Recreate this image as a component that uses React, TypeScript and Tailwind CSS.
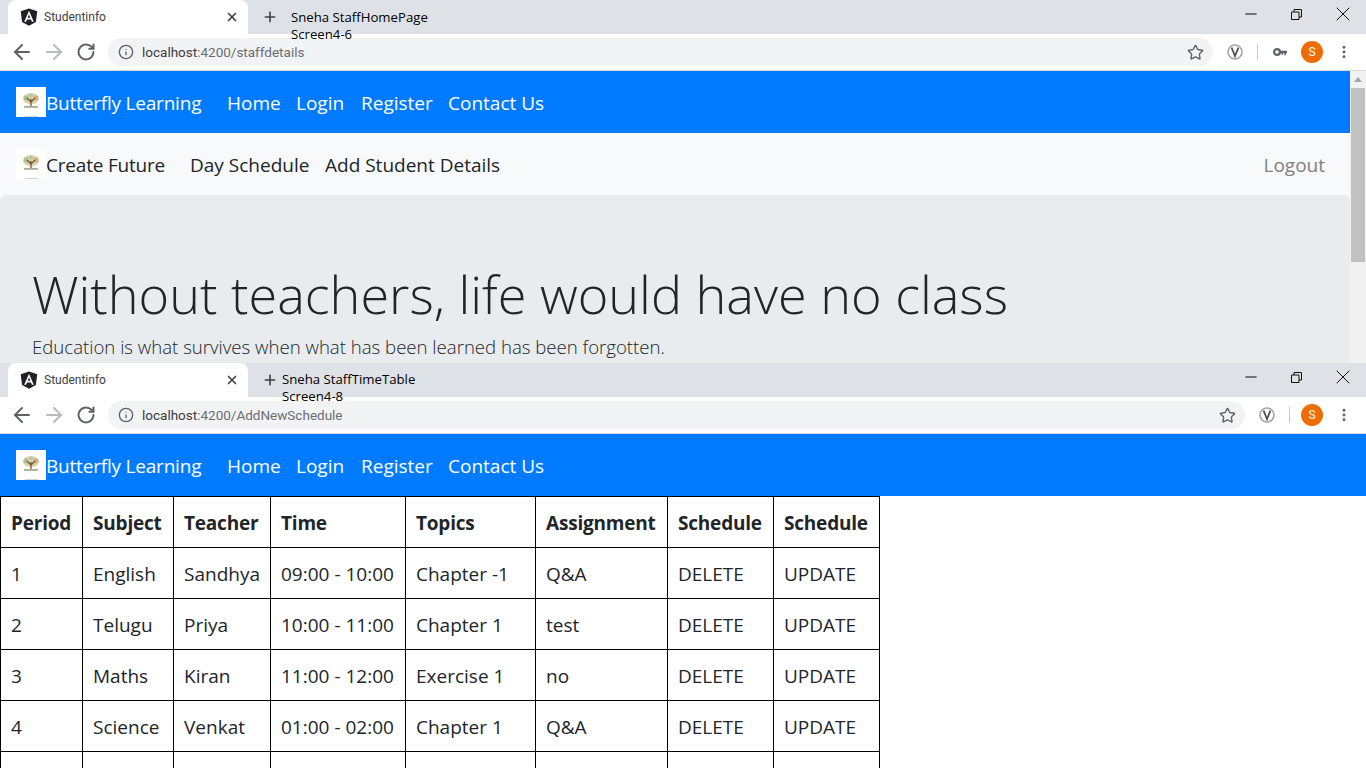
import { ArrowLeft, ArrowRight, RotateCw, Info, Star, X, Plus, Minus, EllipsisVertical } from 'lucide-react';

const font = { sans: "font-['Open_Sans','Liberation_Sans',sans-serif]" };

const rows = [
  ['1', 'English', 'Sandhya', '09:00 - 10:00', 'Chapter -1', 'Q&A'],
  ['2', 'Telugu', 'Priya', '10:00 - 11:00', 'Chapter 1', 'test'],
  ['3', 'Maths', 'Kiran', '11:00 - 12:00', 'Exercise 1', 'no'],
  ['4', 'Science', 'Venkat', '01:00 - 02:00', 'Chapter 1', 'Q&A']
];

const headers = ['Period', 'Subject', 'Teacher', 'Time', 'Topics', 'Assignment', 'Schedule', 'Schedule'];
const colWidths = ['w-[82px]', 'w-[91px]', 'w-[97px]', 'w-[135px]', 'w-[130px]', 'w-[132px]', 'w-[106px]', 'w-[106px]'];

function AngularIcon() {
  return (
    <svg viewBox="0 0 24 24" className="h-[18px] w-[18px] shrink-0">
      <path d="M12 .5 1 4.4l1.8 14.4L12 23.5l9.2-4.7L23 4.4z" fill="#1f2126" />
      <path d="M12 3.6 5.6 18.4h2.5l1.3-3.2h5.2l1.3 3.2h2.5zm0 5.1 1.8 4.4h-3.6z" fill="#fff" />
    </svg>
  );
}

function Logo() {
  return (
    <div className="relative flex h-[30px] w-[30px] shrink-0 items-start justify-center bg-white pt-[6px]">
      <svg viewBox="0 0 18 16" className="h-[16px] w-[18px]">
        <ellipse cx="9" cy="5.5" rx="8" ry="5.5" fill="#d9d3a8" />
        <circle cx="4" cy="5" r="2.4" fill="#a9c095" />
        <circle cx="14" cy="5" r="2.4" fill="#d8ab86" />
        <circle cx="9" cy="2.5" r="2" fill="#b7c79c" />
        <path d="M9 13V6M9 9 5 5M9 9l4-4" stroke="#7a5433" strokeWidth="1.3" fill="none" />
        <rect x="2" y="13" width="14" height="1.8" fill="#a3b08c" />
      </svg>
      <div className="absolute bottom-0 left-[9px] h-px w-[13px] bg-[#d5d5d5]" />
    </div>
  );
}

function VivaldiIcon() {
  return (
    <svg viewBox="0 0 16 16" className="h-4 w-4">
      <circle cx="8" cy="8" r="7" fill="none" stroke="#a3a3a3" strokeWidth="1.6" />
      <path d="M4.6 3.6 8 12l3.4-8.4" fill="none" stroke="#4f5256" strokeWidth="1.8" />
    </svg>
  );
}

function KeyIcon() {
  return (
    <svg viewBox="0 0 14 9" className="h-[9px] w-[14px]">
      <circle cx="4" cy="4" r="2.9" fill="none" stroke="#5f6368" strokeWidth="2.2" />
      <path d="M6.5 2.8H14v2.4h-1.2v2h-1.6v-2H10v1.4H8.4V5.2H6.5z" fill="#5f6368" />
    </svg>
  );
}

function RestoreIcon() {
  return (
    <svg viewBox="0 0 11 11" className="h-[11px] w-[11px]">
      <path d="M.5 3h7.5v7.5H.5zM3 3V.5h7.5V8H8" fill="none" stroke="#111" />
    </svg>
  );
}

function BrowserChrome({ url, keyIcon, omniboxWidth, gap }: { url: string; keyIcon: boolean; omniboxWidth: string; gap: string }) {
  return (
    <>
      <div className="flex h-[34px] shrink-0 bg-[#dee1e6]">
        <div className="ml-2 flex h-[34px] w-[240px] items-center rounded-t-lg bg-white pr-[9px] pl-[12px]">
          <AngularIcon />
          <span className="ml-[6px] font-['Roboto',sans-serif] text-[12px] text-[#3c4043]">Studentinfo</span>
          <X className="ml-auto h-[14px] w-[14px] text-[#45484c]" strokeWidth={3} />
        </div>
        <Plus className="mt-[9px] ml-[14px] h-[16px] w-[16px] text-[#3c4043]" strokeWidth={2.4} />
        <div className="ml-auto flex h-[28px] items-center pr-[11px]">
          <Minus className="h-[18px] w-[18px] text-black" strokeWidth={1.3} />
          <div className="ml-[31px] flex h-[11px] w-[11px]"><RestoreIcon /></div>
          <X className="ml-[29px] h-[24px] w-[24px] text-[#111]" strokeWidth={1} />
        </div>
      </div>
      <div className="flex h-[37px] shrink-0 items-center border-b border-[#d8d9db] bg-white">
        <ArrowLeft className="ml-[10px] h-[24px] w-[24px] text-[#5f6368]" strokeWidth={2} />
        <ArrowRight className="ml-[8px] h-[24px] w-[24px] text-[#b9bbbe]" strokeWidth={2} />
        <RotateCw className="ml-[10px] h-[20px] w-[20px] text-[#5f6368]" strokeWidth={2.4} />
        <div className={`ml-[12px] flex h-[28px] ${omniboxWidth} items-center rounded-full bg-[#f1f3f4] pr-[9px] pl-[10px]`}>
          <Info className="h-[16px] w-[16px] text-[#5f6368]" strokeWidth={2} />
          <span className="ml-[8px] font-['Roboto',sans-serif] text-[13.5px] text-[#6b6e72]"><span className="text-[#3c4043]">localhost</span>{url}</span>
          <Star className="ml-auto h-[17px] w-[17px] text-[#5f6368]" strokeWidth={2} />
        </div>
        <div className="ml-[14px]"><VivaldiIcon /></div>
        <div className="ml-[14px] h-[16px] w-px bg-[#c9cbce]" />
        {keyIcon && <div className="ml-[15px] flex"><KeyIcon /></div>}
        <div className={`${gap} flex h-[22px] w-[22px] items-center justify-center rounded-full bg-[#ef6c00] font-['Roboto',sans-serif] text-[12px] text-white`}>S</div>
        <EllipsisVertical className="ml-[13px] h-[16px] w-[16px] text-[#5f6368]" strokeWidth={2.4} />
      </div>
    </>
  );
}

function PrimaryNav() {
  return (
    <nav className={`flex h-[62px] shrink-0 items-center bg-[#007bff] pl-4 text-[19px] text-white ${font.sans}`}>
      <Logo />
      <div className="flex pt-[2px]">
        <span className="w-[181px] tracking-[-0.2px]">Butterfly Learning</span>
        <span className="w-[69px]">Home</span>
        <span className="w-[65px]">Login</span>
        <span className="w-[87px]">Register</span>
        <span>Contact Us</span>
      </div>
    </nav>
  );
}

function Annotation({ lines, className }: { lines: string[]; className: string }) {
  return (
    <div className={`absolute font-['Open_Sans',sans-serif] text-[13.2px] leading-[17px] text-black ${className}`}>
      {lines.map((line) => (
        <div key={line}>{line}</div>
      ))}
    </div>
  );
}

export default function App() {
  return (
    <div className="h-[768px] w-[1366px] overflow-hidden bg-white">
      <section className="relative flex h-[363px] flex-col overflow-hidden">
        <BrowserChrome url=":4200/staffdetails" keyIcon omniboxWidth="w-[1105px]" gap="ml-[14px]" />
        <Annotation lines={['Sneha StaffHomePage', 'Screen4-6']} className="top-[9px] left-[291px]" />
        <div className="flex min-h-0 flex-1">
          <div className="min-w-0 flex-1 bg-[#f8f9fa]">
            <PrimaryNav />
            <nav className={`flex h-[62px] items-center pr-[25px] pl-4 text-[19px] text-[#212529] ${font.sans}`}>
              <Logo />
              <div className="flex flex-1 pt-[2px]">
                <span className="w-[144px] tracking-[-0.2px]">Create Future</span>
                <span className="w-[135px]">Day Schedule</span>
                <span>Add Student Details</span>
                <span className="ml-auto text-[#7f8183]">Logout</span>
              </div>
            </nav>
            <div className={`h-[168px] rounded-t-md bg-[#e9ecef] pt-[62px] pl-8 text-[#212529] ${font.sans}`}>
              <h1 className="text-[52.2px] leading-[74px] font-light">Without teachers, life would have no class</h1>
              <p className="mt-[2px] text-[18.6px] leading-[28px] font-light">Education is what survives when what has been learned has been forgotten.</p>
            </div>
          </div>
          <div className="flex w-4 flex-col items-center bg-[#f1f1f1]">
            <div className="mt-[6px] h-0 w-0 border-x-[4px] border-b-[5px] border-x-transparent border-b-[#a3a3a3]" />
            <div className="mt-[6px] h-[174px] w-[14px] bg-[#c1c1c1]" />
          </div>
        </div>
      </section>
      <section className="relative flex h-[405px] flex-col overflow-hidden">
        <BrowserChrome url=":4200/AddNewSchedule" keyIcon={false} omniboxWidth="w-[1137px]" gap="ml-[11px]" />
        <Annotation lines={['Sneha StaffTimeTable', 'Screen4-8']} className="top-[8px] left-[282px]" />
        <PrimaryNav />
        <table className={`w-[880px] table-fixed border-collapse text-[19px] text-[#212529] ${font.sans}`}>
          <thead>
            <tr className="h-[51px]">
              {headers.map((h, i) => (
                <th key={i} className={`${colWidths[i]} border border-black px-[10px] pt-[2px] text-left font-bold tracking-[-0.2px] whitespace-nowrap`}>{h}</th>
              ))}
            </tr>
          </thead>
          <tbody>
            {rows.map((row) => (
              <tr key={row[0]} className="h-[51px]">
                {row.map((cell, i) => (
                  <td key={i} className="border border-black px-[10px] pt-[2px] whitespace-nowrap">{cell}</td>
                ))}
                <td className="border border-black px-[10px] pt-[2px]">DELETE</td>
                <td className="border border-black px-[10px] pt-[2px]">UPDATE</td>
              </tr>
            ))}
            <tr className="h-[51px]">
              {headers.map((_, i) => (
                <td key={i} className="border border-black" />
              ))}
            </tr>
          </tbody>
        </table>
      </section>
    </div>
  );
}
